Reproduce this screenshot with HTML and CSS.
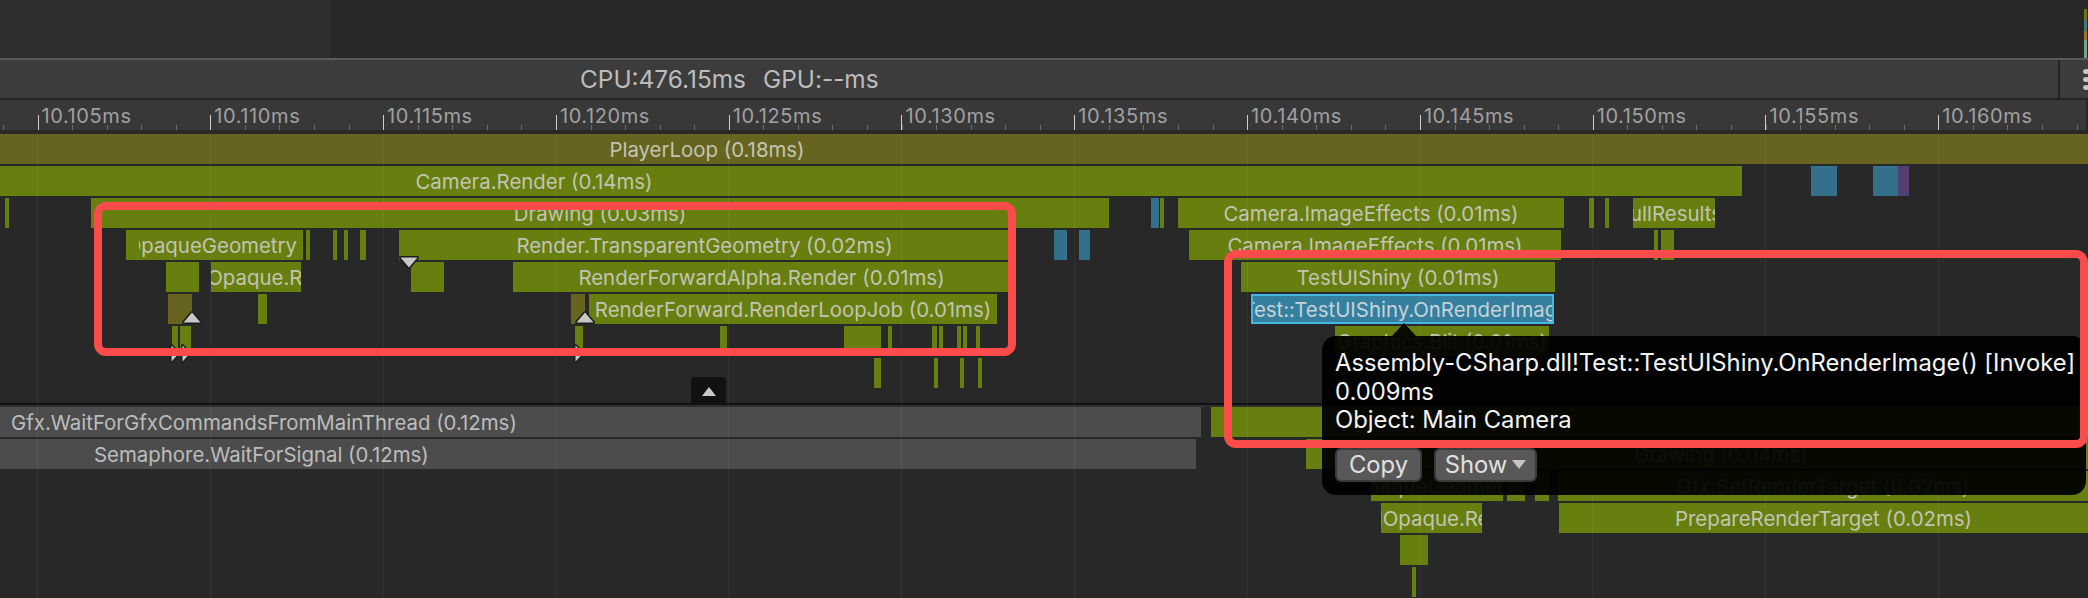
FILE: index.html
```html
<!DOCTYPE html>
<html lang="en">
<head>
<meta charset="utf-8">
<title>Profiler Timeline</title>
<link rel="stylesheet" href="styles.css">
</head>
<body>
<div class="page">
  <div class="top">
    <div class="top-left"></div>
    <div class="top-right">
      <div class="mini">
        <i class="seg seg-a"></i><i class="seg seg-b"></i><i class="seg seg-c"></i><i class="seg seg-d"></i>
      </div>
    </div>
  </div>
  <div class="toolbar">
    <div class="stats"><span>CPU:476.15ms</span><span>GPU:--ms</span></div>
    <div class="more"><i></i><i></i><i></i></div>
  </div>
  <div class="ruler">
    <div class="major"><span>10.105ms</span></div>
    <div class="major"><span>10.110ms</span></div>
    <div class="major"><span>10.115ms</span></div>
    <div class="major"><span>10.120ms</span></div>
    <div class="major"><span>10.125ms</span></div>
    <div class="major"><span>10.130ms</span></div>
    <div class="major"><span>10.135ms</span></div>
    <div class="major"><span>10.140ms</span></div>
    <div class="major"><span>10.145ms</span></div>
    <div class="major"><span>10.150ms</span></div>
    <div class="major"><span>10.155ms</span></div>
    <div class="major"><span>10.160ms</span></div>
  </div>
  <div class="chart">
    <div class="thread main-thread">
      <div class="row">
        <div class="bar olive" style="left:-674px;width:2762px"><span>PlayerLoop (0.18ms)</span></div>
      </div>
      <div class="row">
        <div class="bar" style="left:-674px;width:2416px"><span>Camera.Render (0.14ms)</span></div>
        <div class="bar blue" style="left:1811px;width:26px"></div>
        <div class="bar blue" style="left:1873px;width:25px"></div>
        <div class="bar purple" style="left:1898px;width:11px"></div>
      </div>
      <div class="row">
        <div class="bar" style="left:5px;width:4px"></div>
        <div class="bar" style="left:91px;width:1018px"><span>Drawing (0.03ms)</span></div>
        <div class="bar blue" style="left:1151px;width:8px"></div>
        <div class="bar" style="left:1160px;width:4px"></div>
        <div class="bar" style="left:1178px;width:386px"><span>Camera.ImageEffects (0.01ms)</span></div>
        <div class="bar" style="left:1589px;width:5px"></div>
        <div class="bar" style="left:1605px;width:4px"></div>
        <div class="bar clip-end" style="left:1633px;width:82px"><span>CullResults</span></div>
      </div>
      <div class="row">
        <div class="bar clip-left" style="left:126px;width:177px"><span><b>OpaqueGeometry</b></span></div>
        <div class="bar" style="left:306px;width:4px"></div>
        <div class="bar" style="left:333px;width:4px"></div>
        <div class="bar" style="left:344px;width:4px"></div>
        <div class="bar" style="left:360px;width:6px"></div>
        <div class="bar" style="left:399px;width:611px"><span>Render.TransparentGeometry (0.02ms)</span></div>
        <div class="bar blue" style="left:1054px;width:13px"></div>
        <div class="bar blue" style="left:1079px;width:11px"></div>
        <div class="bar" style="left:1189px;width:372px"><span>Camera.ImageEffects (0.01ms)</span></div>
        <div class="bar" style="left:1654px;width:4px"></div>
        <div class="bar" style="left:1661px;width:13px"></div>
      </div>
      <div class="row">
        <div class="bar" style="left:166px;width:33px"></div>
        <div class="bar nudge-small" style="left:211px;width:90px"><span>RenderForwardOpaque.Render (0.01ms)</span></div>
        <div class="bar" style="left:411px;width:33px"></div>
        <div class="bar" style="left:513px;width:497px"><span>RenderForwardAlpha.Render (0.01ms)</span></div>
        <div class="bar" style="left:1241px;width:314px"><span>TestUIShiny (0.01ms)</span></div>
      </div>
      <div class="row">
        <div class="bar olive" style="left:168px;width:24px"></div>
        <div class="bar" style="left:258px;width:9px"></div>
        <div class="bar olive" style="left:571px;width:14px"></div>
        <div class="bar" style="left:589px;width:408px"><span>RenderForward.RenderLoopJob (0.01ms)</span></div>
        <div class="bar selected" style="left:1251px;width:303px"><span>Assembly-CSharp.dll!Test::TestUIShiny.OnRenderImage() [Invoke] (0.01ms)</span></div>
      </div>
      <div class="row">
        <div class="bar" style="left:172px;width:6px"></div>
        <div class="bar" style="left:180px;width:11px"></div>
        <div class="bar" style="left:575px;width:8px"></div>
        <div class="bar" style="left:720px;width:7px"></div>
        <div class="bar" style="left:844px;width:37px"></div>
        <div class="bar" style="left:888px;width:4px"></div>
        <div class="bar" style="left:932px;width:5px"></div>
        <div class="bar" style="left:939px;width:4px"></div>
        <div class="bar" style="left:957px;width:4px"></div>
        <div class="bar" style="left:963px;width:4px"></div>
        <div class="bar" style="left:976px;width:4px"></div>
        <div class="bar" style="left:1335px;width:214px"><span>Graphics.Blit (0.01ms)</span></div>
      </div>
      <div class="row">
        <div class="bar" style="left:874px;width:7px"></div>
        <div class="bar" style="left:934px;width:4px"></div>
        <div class="bar" style="left:960px;width:4px"></div>
        <div class="bar" style="left:978px;width:4px"></div>
      </div>
    </div>
    <div class="divider"></div>
    <div class="thread">
      <div class="row">
        <div class="bar grey from-left gfx" style="left:0;width:1201px"><span>Gfx.WaitForGfxCommandsFromMainThread (0.12ms)</span></div>
        <div class="bar" style="left:1211px;width:877px"></div>
      </div>
      <div class="row">
        <div class="bar grey from-left sem" style="left:0;width:1196px"><span>Semaphore.WaitForSignal (0.12ms)</span></div>
        <div class="bar" style="left:1306px;width:830px"><span>Drawing (0.04ms)</span></div>
      </div>
      <div class="row">
        <div class="bar" style="left:1371px;width:132px"><span>OpaqueGeometry</span></div>
        <div class="bar" style="left:1507px;width:18px"></div>
        <div class="bar" style="left:1535px;width:14px"></div>
        <div class="bar" style="left:1558px;width:530px"><span>Gfx.SetRenderTarget (0.02ms)</span></div>
      </div>
      <div class="row">
        <div class="bar nudge-small" style="left:1381px;width:101px"><span>RenderForwardOpaque.Render (0.01ms)</span></div>
        <div class="bar" style="left:1559px;width:529px"><span>PrepareRenderTarget (0.02ms)</span></div>
      </div>
      <div class="row">
        <div class="bar" style="left:1400px;width:28px"></div>
      </div>
      <div class="row">
        <div class="bar" style="left:1412px;width:4px"></div>
      </div>
    </div>

    <div class="gridlines">
      <i></i><i></i><i></i><i></i><i></i><i></i><i></i><i></i><i></i><i></i><i></i><i></i>
    </div>

    <svg class="marker up m1" viewBox="0 0 22 15"><polygon points="11,2.5 19.5,12.5 2.5,12.5"/></svg>
    <svg class="marker up m2" viewBox="0 0 22 15"><polygon points="11,2.5 19.5,12.5 2.5,12.5"/></svg>
    <svg class="marker down m3" viewBox="0 0 22 15"><polygon points="2.5,2.5 19.5,2.5 11,12.5"/></svg>
    <svg class="marker side m4" viewBox="0 0 12 21"><polygon points="2.5,2.5 10,10.5 2.5,18.5"/></svg>
    <svg class="marker side m5" viewBox="0 0 12 21"><polygon points="2.5,2.5 10,10.5 2.5,18.5"/></svg>
    <svg class="marker side m6" viewBox="0 0 12 21"><polygon points="2.5,2.5 10,10.5 2.5,18.5"/></svg>

    <div class="collapse-tab"><svg class="tab-arrow" viewBox="0 0 14 9"><polygon points="7,0 14,9 0,9"/></svg></div>

    <div class="tooltip">
      <svg class="tip-arrow" viewBox="0 0 24 13"><polygon points="12,0 24,13 0,13"/></svg>
      <div class="tip-text">
        <div>Assembly-CSharp.dll!Test::TestUIShiny.OnRenderImage() [Invoke]</div>
        <div>0.009ms</div>
        <div>Object: Main Camera</div>
      </div>
      <div class="tip-buttons">
        <div class="btn btn-copy">Copy</div>
        <div class="btn btn-show">Show<svg class="caret" viewBox="0 0 14 9"><polygon points="0,0 14,0 7,9"/></svg></div>
      </div>
    </div>

    <div class="callout callout-a"></div>
    <div class="callout callout-b"></div>
  </div>
</div>
</body>
</html>
```
FILE: styles.css
```css
* { box-sizing: border-box; }
html, body { margin: 0; padding: 0; background: #282828; }
body { font-family: Inter, "Noto Sans", "Liberation Sans", sans-serif; }
.page { width: 2088px; height: 598px; overflow: hidden; display: flex; flex-direction: column; }

.top { height: 58px; display: flex; flex: none; }
.top-left { width: 330px; background: #2e2e2e; }
.top-right { flex: 1; background: #282828; display: flex; justify-content: flex-end; align-items: flex-end; padding-right: 1px; }
.mini { width: 3px; height: 49px; display: flex; flex-direction: column; }
.seg { display: block; }
.seg-a { height: 11px; background: #5e7a10; }
.seg-b { height: 11px; background: #3a7f72; }
.seg-c { height: 9px; background: #96752a; }
.seg-d { height: 18px; background: #6da58a; }

.toolbar {
  height: 42px; flex: none; display: flex; background: #3c3c3c;
  border-top: 2px solid #5a5a5a; border-bottom: 2px solid #232323;
}
.stats {
  flex: none; width: 2060px; padding-left: 580px; display: flex; gap: 17px; align-items: center;
  color: #bcbcbc; font-size: 24.4px; border-right: 2px solid #232323;
}
.more { flex: 1; display: flex; flex-direction: column; gap: 3px; justify-content: center; padding-left: 23px; }
.more i { display: block; width: 7px; height: 5px; border-radius: 50%; background: #c8c8c8; flex: none; }

.ruler {
  height: 30px; flex: none; width: 2086px; display: flex; padding-left: 37.5px; background-color: #383838;
  background-image: repeating-linear-gradient(to right, #6e6e6e 0, #6e6e6e 1px, transparent 1px, transparent 34.56px);
  background-size: 100% 5px; background-position: 3px 100%; background-repeat: no-repeat;
  color: #a0a0a0; font-size: 20px; letter-spacing: 0.6px;
}
.major { flex: none; width: 172.8px; height: 15px; margin-top: 15px; border-left: 1px solid #d0d0d0; position: relative; }
.major span { display: block; margin-top: -12px; padding-left: 3px; line-height: 26px; }

.chart { position: relative; flex: 1; margin-top: 4px; overflow: hidden; background: #282828; }
.thread { display: flex; flex-direction: column; gap: 2px; }
.main-thread { height: 269px; }
.divider { height: 4px; border-top: 2px solid #111111; background: #2f2f2f; }
.row { position: relative; height: 30px; flex: none; }

.bar {
  position: absolute; top: 0; height: 30px; background: #667f0e; color: #c4c4b4; font-size: 20.4px;
  display: flex; align-items: center; justify-content: center; overflow: hidden; white-space: nowrap;
}
.bar span { flex: none; }
.olive { background: #66641f; }
.blue { background: #33708b; }
.purple { background: #544070; }
.grey { background: #4c4c4c; color: #bcbcbc; }
.from-left { justify-content: flex-start; }
.gfx { padding-left: 11px; }
.sem { padding-left: 94px; }
.clip-end { justify-content: flex-end; }
.clip-end span { margin-right: -7px; }
.clip-left { padding: 0 6px 0 13px; }
.clip-left span { flex: 1 1 0; min-width: 0; overflow: hidden; display: flex; justify-content: flex-end; }
.clip-left b { flex: none; font-weight: inherit; }
.nudge-small span { margin-right: 7px; }
.selected { background: #357f9f; border: 2px solid #44b7e0; color: #c6d2d8; }
.selected span { margin-right: 16px; }

.gridlines { position: absolute; inset: 0; display: flex; padding-left: 37px; pointer-events: none; }
.gridlines i { display: block; flex: none; width: 172.8px; border-left: 1px solid rgba(255,255,255,0.05); }

.marker { position: absolute; }
.marker polygon { fill: #c8c8c8; stroke: #1c1c1c; stroke-width: 3; stroke-linejoin: round; paint-order: stroke; }
.up, .down { width: 22px; height: 15px; }
.side { width: 12px; height: 21px; }
.m1 { left: 181px; top: 176px; }
.m2 { left: 574px; top: 176px; }
.m3 { left: 398px; top: 121px; }
.m4 { left: 169px; top: 209px; }
.m5 { left: 180px; top: 209px; }
.m6 { left: 573px; top: 209px; }

.collapse-tab {
  position: absolute; left: 691px; top: 243px; width: 35px; height: 26px; background: #111111;
  border-radius: 4px 4px 0 0; display: flex; justify-content: center; padding-top: 10px;
}
.tab-arrow { width: 14px; height: 9px; }
.tab-arrow polygon { fill: #c8c8c8; }

.tooltip {
  position: absolute; left: 1322px; top: 202px; width: 764px; height: 159px;
  background: rgba(0,0,0,0.93); border-radius: 14px; padding: 13px 13px 12px; color: #f4f4f4;
  display: flex; flex-direction: column;
}
.tip-arrow { position: absolute; left: 70px; top: -13px; width: 24px; height: 13px; }
.tip-arrow polygon { fill: #0a0a00; }
.tip-text { font-size: 23.8px; line-height: 28.5px; white-space: nowrap; }
.tip-buttons { display: flex; gap: 12px; margin-top: 13px; }
.btn {
  height: 34px; background: #585858; border: 2px solid #3a3a3a; border-radius: 6px; color: #e0e0e0;
  font-size: 23.8px; display: flex; align-items: center; justify-content: center;
}
.btn-copy { width: 87px; }
.btn-show { width: 103px; gap: 5px; }
.caret { width: 14px; height: 9px; }
.caret polygon { fill: #c4c4c4; }

.callout { position: absolute; border: 8px solid #fb4b4b; border-radius: 12px; pointer-events: none; }
.callout-a { left: 94px; top: 68px; width: 922px; height: 154px; }
.callout-b { left: 1224px; top: 116px; width: 864px; height: 198px; }
```
